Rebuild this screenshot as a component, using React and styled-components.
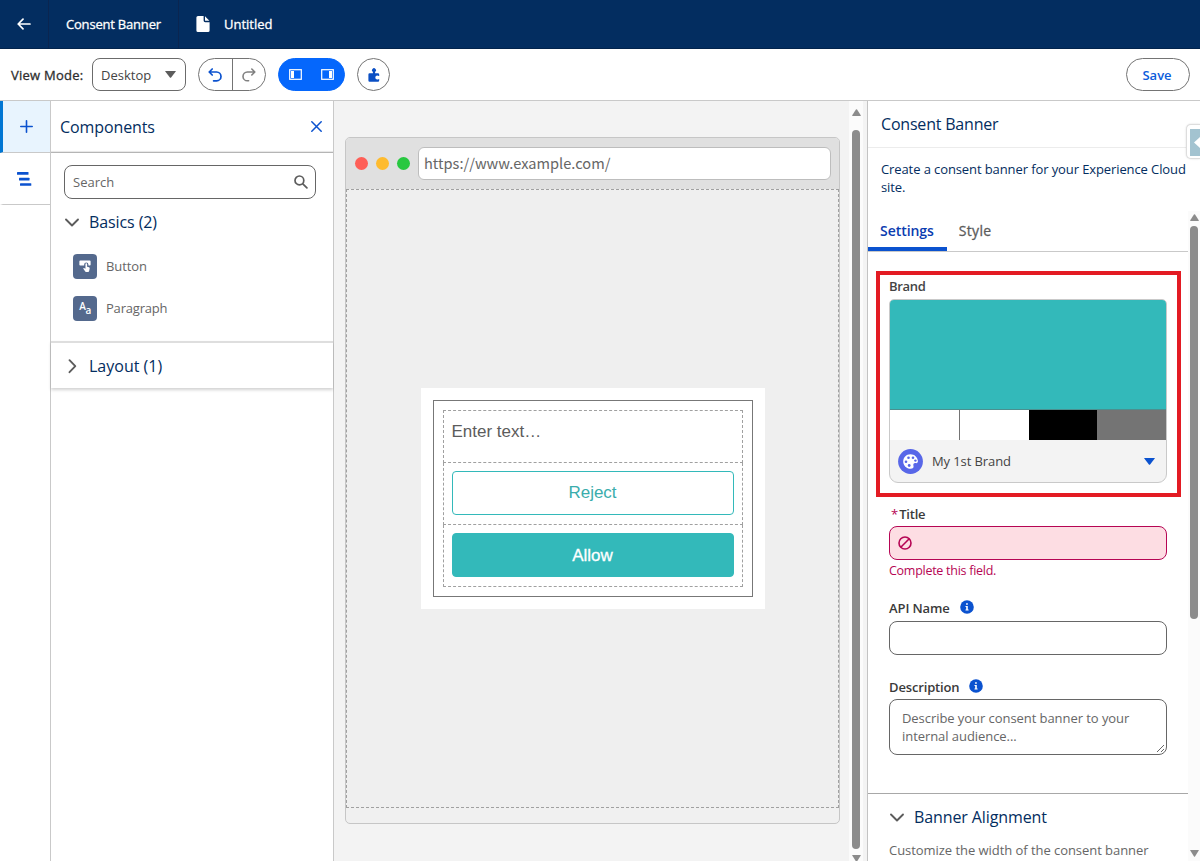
import React from 'react';
import styled, { createGlobalStyle } from 'styled-components';

const GlobalStyle = createGlobalStyle`
  * {
    box-sizing: border-box;
  }
  body {
    margin: 0;
    overflow: hidden;
    background: #fff;
    color: #2e2e2e;
    font-family: "Open Sans", "Noto Sans", sans-serif;
    font-size: 13px;
  }
  svg {
    display: block;
    flex: none;
  }
`;

const Page = styled.div`
  width: 1200px;
  height: 861px;
  display: flex;
  flex-direction: column;
  overflow: hidden;
`;

const Label = styled.span`
  font-size: ${props => props.$size || 13}px;
  font-weight: ${props => props.$weight || 400};
  letter-spacing: ${props => props.$track || 0}px;
  line-height: 18px;
  color: ${props => props.$color || 'inherit'};
  white-space: nowrap;
  -webkit-text-stroke: ${props => (props.$medium ? '0.3px' : '0')};
`;

const UrlText = styled(Label)`
  font-family: "Noto Sans CJK SC", "Noto Sans", sans-serif;
`;

/* top bar */

const TopBar = styled.header`
  height: 49px;
  flex: none;
  display: flex;
  background: #032d60;
  border-bottom: 1px solid #02234c;
  color: #fff;
`;

const TopCell = styled.div`
  width: ${props => props.$width}px;
  display: flex;
  align-items: center;
  padding-left: ${props => props.$pad}px;
  padding-bottom: 1px;
  gap: 14px;
  border-right: ${props => (props.$last ? 'none' : '1px solid #0a2550')};
`;

/* toolbar */

const Toolbar = styled.div`
  height: 52px;
  flex: none;
  display: flex;
  align-items: center;
  padding: 0 10px 0 11px;
  border-bottom: 1px solid #c9c9c9;
`;

const ModeLabel = styled.div`
  width: 73px;
  display: flex;
`;

const ModeSelect = styled.div`
  width: 94px;
  height: 33px;
  margin-left: 8px;
  padding: 0 9px 0 8px;
  display: flex;
  align-items: center;
  justify-content: space-between;
  border: 1px solid #6b6b6b;
  border-radius: 8px;
`;

const PillGroup = styled.div`
  width: ${props => props.$width}px;
  height: 33px;
  margin-left: 12px;
  display: flex;
  overflow: hidden;
  border-radius: 17px;
  border: 1px solid ${props => (props.$filled ? '#0567fc' : '#747474')};
  background: ${props => (props.$filled ? '#0567fc' : '#fff')};
`;

const PillCell = styled.div`
  flex: 1;
  display: flex;
  align-items: center;
  justify-content: center;
  border-right: ${props => (props.$divided ? '1px solid #747474' : 'none')};
`;

const SaveButton = styled.div`
  width: 64px;
  height: 33px;
  margin-left: auto;
  padding-right: 2px;
  display: flex;
  align-items: center;
  justify-content: center;
  border: 1px solid #747474;
  border-radius: 17px;
`;

/* left side */

const Body = styled.div`
  flex: 1;
  min-height: 0;
  display: flex;
`;

const Rail = styled.nav`
  width: 51px;
  flex: none;
  border-right: 1px solid #c9c9c9;
`;

const RailItem = styled.div`
  height: 52px;
  display: flex;
  align-items: center;
  justify-content: center;
  border-bottom: 1px solid #c9c9c9;
  border-left: 3px solid ${props => (props.$active ? '#0176d3' : '#fff')};
  background: ${props => (props.$active ? '#e8f4fe' : '#fff')};
  padding-right: ${props => (props.$active ? 0 : 4)}px;
`;

const Components = styled.aside`
  width: 283px;
  flex: none;
  border-right: 1px solid #c9c9c9;
`;

const PanelHead = styled.div`
  height: 52px;
  display: flex;
  align-items: center;
  justify-content: space-between;
  padding: 0 11px 0 9px;
  border-bottom: 1px solid #b5b5b5;
  box-shadow: inset 0 -2px 1px -1px rgba(0, 0, 0, 0.1);
`;

const SearchBox = styled.div`
  height: 34px;
  margin: 12px 17px 0 13px;
  padding: 0 7px 0 8px;
  display: flex;
  align-items: center;
  justify-content: space-between;
  border: 1px solid #666;
  border-radius: 8px;
`;

const SectionHead = styled.div`
  height: ${props => props.$height}px;
  display: flex;
  align-items: center;
  gap: 9px;
  padding-left: 13px;
`;

const ComponentRow = styled.div`
  height: 42px;
  display: flex;
  align-items: center;
  gap: 9px;
  padding-left: 22px;
`;

const ComponentIcon = styled.div`
  width: 24px;
  height: 25px;
  display: flex;
  align-items: center;
  justify-content: center;
  border-radius: 4px;
  background: #54698d;
`;

const LayoutSection = styled.div`
  margin-top: 12px;
  border-top: 2px solid #dedede;
  box-shadow: 0 2px 3px rgba(0, 0, 0, 0.18);
`;

/* canvas */

const Canvas = styled.main`
  flex: 1;
  display: flex;
  background: #f3f3f3;
`;

const BrowserFrame = styled.div`
  width: 495px;
  height: 687px;
  margin: 36px 0 0 11px;
  display: flex;
  flex-direction: column;
  border: 1px solid #c6c6c6;
  border-radius: 5px;
  background: #f0f0f0;
  overflow: hidden;
`;

const BrowserBar = styled.div`
  height: 51px;
  flex: none;
  display: flex;
  align-items: center;
  gap: 8px;
  padding: 0 8px 0 9px;
  background: #e0e0e0;
`;

const Dot = styled.i`
  width: 13px;
  height: 13px;
  border-radius: 50%;
  background: ${props => props.$color};
`;

const Address = styled.div`
  flex: 1;
  height: 33px;
  display: flex;
  align-items: center;
  padding: 0 0 1px 5px;
  border: 1px solid #bdbdbd;
  border-radius: 6px;
  background: #fff;
`;

const Stage = styled.div`
  height: 619px;
  flex: none;
  display: flex;
  align-items: center;
  justify-content: center;
  border: 1px dashed #a0a0a0;
  background: #efefef;
`;

const BannerCard = styled.div`
  width: 344px;
  height: 221px;
  padding: 12px;
  background: #fff;
`;

const BannerFrame = styled.div`
  height: 197px;
  padding: 9px;
  border: 1px solid #777;
`;

const BannerSlot = styled.div`
  height: ${props => props.$height}px;
  padding: 8px;
  font-family: "Liberation Sans", Arial, sans-serif;
  border: 1px dashed #a0a0a0;
  border-top-width: ${props => (props.$first ? 1 : 0)}px;
`;

const BannerText = styled.div`
  padding-top: 3px;
  font-size: 17px;
  line-height: 19px;
  color: #5c5c5c;
`;

const BannerButton = styled.div`
  height: 44px;
  padding-top: ${props => (props.$filled ? 1 : 0)}px;
  display: flex;
  align-items: center;
  justify-content: center;
  border: 1px solid #33b9ba;
  border-radius: 4px;
  font-size: 17px;
  color: ${props => (props.$filled ? '#fff' : '#3aadac')};
  background: ${props => (props.$filled ? '#33b9ba' : '#fff')};
  -webkit-text-stroke: ${props => (props.$filled ? '0.3px' : '0')};
`;

const Scrollbar = styled.div`
  width: ${props => props.$width}px;
  height: ${props => props.$height}px;
  margin-left: ${props => props.$gap || 0}px;
  flex: none;
  display: flex;
  flex-direction: column;
  align-items: center;
  padding: ${props => props.$pad}px 0 0;
  background: #fbfbfb;
`;

const Thumb = styled.div`
  width: 8px;
  height: ${props => props.$height}px;
  margin: ${props => props.$top}px 0 ${props => props.$bottom}px;
  flex: none;
  border-radius: 4px;
  background: #8b8b8b;
`;

/* right side */

const Inspector = styled.aside`
  position: relative;
  width: 333px;
  flex: none;
  border-left: 1px solid #c3c3c3;
  background: #fff;
`;

const InspectorTitle = styled.div`
  height: 47px;
  padding: 14px 12px 0 13px;
  border-bottom: 1px solid #ececec;
`;

const Intro = styled.div`
  height: 63px;
  padding: 12px 12px 0 13px;
  display: flex;
  flex-direction: column;
`;

const InspectorBody = styled.div`
  display: flex;
`;

const Settings = styled.div`
  width: 320px;
`;

const Tabs = styled.div`
  height: 41px;
  display: flex;
  border-bottom: 1px solid #c9c9c9;
`;

const Tab = styled.div`
  height: 40px;
  padding: 11px 13px 0 12px;
  border-bottom: ${props => (props.$active ? '4px solid #0b52cf' : 'none')};
`;

const Highlight = styled.div`
  width: 305px;
  height: 226px;
  margin: 19px 0 0 8px;
  padding: 2px 10px 0 9px;
  border: 4px solid #e31b23;
`;

const BrandCard = styled.div`
  width: 278px;
  height: 184px;
  margin-top: 4px;
  border: 1px solid #c9c9c9;
  border-radius: 5px 5px 9px 9px;
  overflow: hidden;
  background: #f3f3f3;
`;

const BrandColor = styled.div`
  height: 110px;
  background: #33b9ba;
  border-bottom: 1px solid #4b8f8f;
`;

const Swatches = styled.div`
  height: 30px;
  display: flex;
`;

const Swatch = styled.div`
  flex: 1;
  background: ${props => props.$color};
  border-right: ${props => (props.$divided ? '1px solid #747474' : 'none')};
`;

const BrandFooter = styled.div`
  height: 42px;
  display: flex;
  align-items: center;
  padding: 0 11px 0 8px;
  gap: 9px;
  svg:last-child {
    margin-left: auto;
  }
`;

const Fields = styled.div`
  padding: 8px 21px 0;
  height: 296px;
`;

const FieldLabel = styled.div`
  height: 18px;
  margin-top: ${props => props.$top || 0}px;
  display: flex;
  align-items: center;
  gap: 10px;
  svg {
    margin-top: -2px;
  }
`;

const Required = styled.span`
  display: flex;
  margin: 0 -9px 0 2px;
  color: #b60554;
`;

const Input = styled.div`
  height: 34px;
  margin-top: ${props => props.$top}px;
  padding-left: 8px;
  display: flex;
  align-items: center;
  border: 1px solid ${props => (props.$error ? '#b60554' : '#666')};
  border-radius: 8px;
  background: ${props => (props.$error ? '#fddde3' : '#fff')};
`;

const TextArea = styled.div`
  height: 56px;
  margin-top: 3px;
  padding: 9px 1px 1px 12px;
  display: flex;
  justify-content: space-between;
  align-items: flex-end;
  border: 1px solid #666;
  border-radius: 8px;
`;

const Lines = styled.div`
  display: flex;
  flex-direction: column;
  align-self: flex-start;
`;

const Alignment = styled.div`
  border-top: 1px solid #a8a8a8;
  padding: 14px 21px 0;
`;

const AlignmentHead = styled.div`
  display: flex;
  align-items: center;
  gap: 9px;
  margin-bottom: 15px;
`;

const Handle = styled.div`
  position: absolute;
  right: 0;
  top: 23px;
  width: 14px;
  height: 35px;
  padding: 4px 0 0 3px;
  border: 1px solid #ddd;
  border-right: none;
  border-radius: 5px 0 0 5px;
  background: #fff;
  box-shadow: 0 0 2px rgba(0, 0, 0, 0.15);
`;

const ArrowLeft = () => (
  <svg width="14" height="12" viewBox="0 0 14 12" fill="none" stroke="#fff" strokeWidth="1.7" strokeLinecap="round" strokeLinejoin="round">
    <path d="M13 6H1.2M6 1.2L1.2 6L6 10.8" />
  </svg>
);

const FileIcon = () => (
  <svg width="14" height="16" viewBox="0 0 14 16" fill="#fff">
    <path d="M2 0H7.6V4.6Q7.6 6.2 9.2 6.2H13.6V14.4Q13.6 16 12 16H2Q.4 16 .4 14.4V1.6Q.4 0 2 0Z" />
    <path d="M9 .3L13.4 4.8H9.6Q9 4.8 9 4.2Z" />
  </svg>
);

const Triangle = ({ color, up, width = 11, height = 7 }) => (
  <svg width={width} height={height} viewBox="0 0 11 7" preserveAspectRatio="none" fill={color}>
    <path d={up ? 'M.6 7H10.4Q11 7 10.7 6.3L6.2.5Q5.5 0 4.8.5L.3 6.3Q0 7 .6 7Z' : 'M.5 0H10.5Q11 0 10.7.6L6.1 6.5Q5.5 7 4.9 6.5L.3.6Q0 0 .5 0Z'} />
  </svg>
);

const UndoIcon = () => (
  <svg width="14" height="14" viewBox="0 0 14 14" fill="none" stroke="#0b52cf" strokeWidth="1.7" strokeLinecap="round" strokeLinejoin="round">
    <path d="M4.2 1L1.2 4L4.2 7M1.4 4H8.6A4.4 4.4 0 0 1 8.6 12.8H5.6" />
  </svg>
);

const RedoIcon = () => (
  <svg width="14" height="14" viewBox="0 0 14 14" fill="none" stroke="#808080" strokeWidth="1.6" strokeLinecap="round" strokeLinejoin="round">
    <path d="M9.8 1L12.8 4L9.8 7M12.6 4H5.4A4.4 4.4 0 0 0 5.4 12.8H6.6" />
  </svg>
);

const PanelIcon = ({ right }) => (
  <svg width="13" height="11" viewBox="0 0 13 11">
    <rect x=".7" y=".7" width="11.6" height="9.6" fill="none" stroke="#fff" strokeWidth="1.2" />
    <rect x={right ? 8 : 2} y="2" width="3" height="7" fill="#fff" />
  </svg>
);

const PuzzleIcon = () => (
  <svg width="12" height="14" viewBox="0 0 12 14" fill="#0b4fc4">
    <path d="M1.6 5.2H4.9V3.9A2 2 0 1 1 7.1 3.9V5.2H9.9Q11.2 5.2 11.2 6.4V7.9H10.9Q10.2 7.4 9.3 7.4A2 2 0 0 0 9.3 11.4Q10.2 11.4 10.9 10.9H11.2V12.6Q11.2 13.8 10 13.8H1.6Q.4 13.8 .4 12.6V6.4Q.4 5.2 1.6 5.2Z" />
  </svg>
);

const PlusIcon = () => (
  <svg width="13" height="13" viewBox="0 0 13 13" stroke="#0b52cf" strokeWidth="1.6" strokeLinecap="round">
    <path d="M6.5 .8V12.2M.8 6.5H12.2" />
  </svg>
);

const TreeIcon = () => (
  <svg width="15" height="14" viewBox="0 0 15 14" fill="#0b52cf">
    <rect x="0" y="0" width="11.5" height="2.8" rx=".5" />
    <rect x="2" y="5.8" width="10.5" height="2.6" rx=".5" />
    <rect x="3" y="11.2" width="11.3" height="2.6" rx=".5" />
  </svg>
);

const CloseIcon = () => (
  <svg width="11" height="11" viewBox="0 0 11 11" stroke="#0b52cf" strokeWidth="1.5" strokeLinecap="round">
    <path d="M.8 .8L10.2 10.2M10.2 .8L.8 10.2" />
  </svg>
);

const SearchIcon = () => (
  <svg width="14" height="14" viewBox="0 0 14 14" fill="none" stroke="#5c5c5c" strokeWidth="1.7" strokeLinecap="round">
    <circle cx="5.4" cy="5.4" r="4.4" />
    <path d="M8.8 8.8L12.9 12.9" />
  </svg>
);

const Chevron = ({ right }) => (
  <svg width="16" height="16" viewBox="0 0 16 16" fill="none" stroke="#5c5c5c" strokeWidth="1.9" strokeLinecap="round" strokeLinejoin="round">
    <path d={right ? 'M5.5 2.2L11.3 8.2L5.5 14.2' : 'M2 5.5L8 11.5L14 5.5'} />
  </svg>
);

const ButtonGlyph = () => (
  <svg width="12" height="13" viewBox="0 0 13 13" fill="#fff">
    <path d="M1.4 0H11.6Q12.6 0 12.6 1V4.6Q12.6 5.4 11.6 5.4H10.2V4.4A2.3 2.3 0 0 0 5.6 4.4V5.4H1.4Q.4 5.4 .4 4.6V1Q.4 0 1.4 0Z" />
    <path d="M7 3.9A.9 .9 0 0 1 8.8 3.9V6.8L10.9 7.4Q11.7 7.7 11.6 8.5L11 11.4Q10.8 12.4 9.8 12.4H8Q7.2 12.4 6.8 11.8L4.5 8.7Q5 7.8 6 8.3L7 8.9Z" />
  </svg>
);

const GlyphText = styled.span`
  margin-top: ${props => (props.$low ? 4 : -4)}px;
  color: #fff;
  font-size: 10px;
  font-weight: 600;
  line-height: 10px;
  letter-spacing: -0.5px;
`;

const PaletteIcon = () => (
  <svg width="25" height="25" viewBox="0 0 25 25">
    <circle cx="12.5" cy="12.5" r="12.4" fill="#5867e8" />
    <path d="M12.5 5.2C8 5.2 5.2 8.7 5.2 12.5C5.2 16.6 8.5 19.8 12.6 19.8C14.8 19.8 16 18.6 15.5 17C14.8 14.8 16 13.9 17.6 14.1C19.2 14.3 20 13.6 19.9 12C19.5 8 16.5 5.2 12.5 5.2Z" fill="#fff" />
    <g fill="#5867e8">
      <circle cx="10.5" cy="8.8" r="1.3" />
      <circle cx="15" cy="8.8" r="1.3" />
      <circle cx="8" cy="12.7" r="1.3" />
      <circle cx="11.2" cy="16.5" r="1.4" />
      <circle cx="17.4" cy="11.6" r="1.2" />
    </g>
  </svg>
);

const ErrorIcon = () => (
  <svg width="14" height="14" viewBox="0 0 14 14" fill="none" stroke="#b60554" strokeWidth="1.6">
    <circle cx="7" cy="7" r="6" />
    <path d="M2.8 11.2L11.2 2.8" />
  </svg>
);

const InfoIcon = () => (
  <svg width="14" height="14" viewBox="0 0 14 14">
    <circle cx="7" cy="7" r="6.8" fill="#0b52cf" />
    <path d="M6.1 3.2H7.8V4.7H6.1ZM5.5 5.9H7.8V9.6H8.6V10.6H5.5V9.6H6.2V6.9H5.5Z" fill="#fff" />
  </svg>
);

const ResizeGrip = () => (
  <svg width="9" height="9" viewBox="0 0 9 9" stroke="#666" strokeWidth="1">
    <path d="M1 8L8 1M5 8L8 5" />
  </svg>
);

const HandleArrow = () => (
  <svg width="11" height="27" viewBox="0 0 11 27">
    <rect width="11" height="27" fill="#a3c3d0" />
    <path d="M4 13.5L11 7V20Z" fill="#fff" />
  </svg>
);

export default function App() {
  return (
    <Page>
      <GlobalStyle />
      <TopBar>
        <TopCell $width={49} $pad={17}>
          <ArrowLeft />
        </TopCell>
        <TopCell $width={130} $pad={17}>
          <Label $medium $track={-0.2}>Consent Banner</Label>
        </TopCell>
        <TopCell $width={300} $pad={17} $last>
          <FileIcon />
          <Label $medium>Untitled</Label>
        </TopCell>
      </TopBar>

      <Toolbar>
        <ModeLabel>
          <Label $medium $track={0.25}>View Mode:</Label>
        </ModeLabel>
        <ModeSelect>
          <Label $color="#444">Desktop</Label>
          <Triangle color="#5c5c5c" />
        </ModeSelect>
        <PillGroup $width={68}>
          <PillCell $divided><UndoIcon /></PillCell>
          <PillCell><RedoIcon /></PillCell>
        </PillGroup>
        <PillGroup $width={67} $filled>
          <PillCell><PanelIcon /></PillCell>
          <PillCell><PanelIcon right /></PillCell>
        </PillGroup>
        <PillGroup $width={33}>
          <PillCell><PuzzleIcon /></PillCell>
        </PillGroup>
        <SaveButton>
          <Label $weight={600} $color="#0b5cdb">Save</Label>
        </SaveButton>
      </Toolbar>

      <Body>
        <Rail>
          <RailItem $active><PlusIcon /></RailItem>
          <RailItem><TreeIcon /></RailItem>
        </Rail>

        <Components>
          <PanelHead>
            <Label $size={16} $track={-0.1} $color="#032d60">Components</Label>
            <CloseIcon />
          </PanelHead>
          <SearchBox>
            <Label $color="#666">Search</Label>
            <SearchIcon />
          </SearchBox>
          <SectionHead $height={46}>
            <Chevron />
            <Label $size={16} $track={-0.1} $color="#032d60">Basics (2)</Label>
          </SectionHead>
          <ComponentRow>
            <ComponentIcon><ButtonGlyph /></ComponentIcon>
            <Label $track={-0.1} $color="#666">Button</Label>
          </ComponentRow>
          <ComponentRow>
            <ComponentIcon>
              <GlyphText>A</GlyphText>
              <GlyphText $low>a</GlyphText>
            </ComponentIcon>
            <Label $track={-0.2} $color="#666">Paragraph</Label>
          </ComponentRow>
          <LayoutSection>
            <SectionHead $height={45}>
              <Chevron right />
              <Label $size={16} $color="#032d60">Layout (1)</Label>
            </SectionHead>
          </LayoutSection>
        </Components>

        <Canvas>
          <BrowserFrame>
            <BrowserBar>
              <Dot $color="#fe5f57" />
              <Dot $color="#febb2e" />
              <Dot $color="#28c840" />
              <Address>
                <UrlText $size={14.6} $color="#666">https://www.example.com/</UrlText>
              </Address>
            </BrowserBar>
            <Stage>
              <BannerCard>
                <BannerFrame>
                  <BannerSlot $height={53} $first>
                    <BannerText>Enter text…</BannerText>
                  </BannerSlot>
                  <BannerSlot $height={62}>
                    <BannerButton>Reject</BannerButton>
                  </BannerSlot>
                  <BannerSlot $height={62}>
                    <BannerButton $filled>Allow</BannerButton>
                  </BannerSlot>
                </BannerFrame>
              </BannerCard>
            </Stage>
          </BrowserFrame>
          <Scrollbar $width={14} $height={760} $gap={9} $pad={8}>
            <Triangle color="#8b8b8b" up width={9} height={7} />
            <Thumb $height={719} $top={14} $bottom={6} />
            <Triangle color="#8b8b8b" width={9} height={7} />
          </Scrollbar>
        </Canvas>

        <Inspector>
          <InspectorTitle>
            <Label $size={16} $track={-0.2} $color="#032d60">Consent Banner</Label>
          </InspectorTitle>
          <Intro>
            <Label $track={-0.1} $color="#032d60">Create a consent banner for your Experience Cloud</Label>
            <Label $track={-0.1} $color="#032d60">site.</Label>
          </Intro>
          <InspectorBody>
            <Settings>
              <Tabs>
                <Tab $active><Label $size={14} $weight={600} $track={-0.05} $color="#0a3cb0">Settings</Label></Tab>
                <Tab><Label $size={14} $medium $track={0.3} $color="#5c5c5c">Style</Label></Tab>
              </Tabs>
              <Highlight>
                <Label $weight={600} $track={-0.3} $color="#444">Brand</Label>
                <BrandCard>
                  <BrandColor />
                  <Swatches>
                    <Swatch $color="#fff" $divided />
                    <Swatch $color="#fff" />
                    <Swatch $color="#000" />
                    <Swatch $color="#747474" />
                  </Swatches>
                  <BrandFooter>
                    <PaletteIcon />
                    <Label $track={-0.1} $color="#444">My 1st Brand</Label>
                    <Triangle color="#0b52cf" />
                  </BrandFooter>
                </BrandCard>
              </Highlight>
              <Fields>
                <FieldLabel>
                  <Required>*</Required>
                  <Label $weight={600} $track={-0.2} $color="#3a3a3a">Title</Label>
                </FieldLabel>
                <Input $top={3} $error><ErrorIcon /></Input>
                <FieldLabel $top={2}>
                  <Label $size={12.5} $track={-0.27} $color="#b60554">Complete this field.</Label>
                </FieldLabel>
                <FieldLabel $top={19}>
                  <Label $weight={600} $track={-0.1} $color="#3a3a3a">API Name</Label>
                  <InfoIcon />
                </FieldLabel>
                <Input $top={4} />
                <FieldLabel $top={23}>
                  <Label $weight={600} $track={-0.15} $color="#3a3a3a">Description</Label>
                  <InfoIcon />
                </FieldLabel>
                <TextArea>
                  <Lines>
                    <Label $track={-0.06} $color="#666">Describe your consent banner to your</Label>
                    <Label $track={-0.06} $color="#666">internal audience...</Label>
                  </Lines>
                  <ResizeGrip />
                </TextArea>
              </Fields>
              <Alignment>
                <AlignmentHead>
                  <Chevron />
                  <Label $size={16} $track={-0.1} $color="#032d60">Banner Alignment</Label>
                </AlignmentHead>
                <Label $track={-0.05} $color="#666">Customize the width of the consent banner</Label>
              </Alignment>
            </Settings>
            <Scrollbar $width={12} $height={650} $pad={3}>
              <Triangle color="#8b8b8b" up width={9} height={7} />
              <Thumb $height={393} $top={5} $bottom={231} />
              <Triangle color="#8b8b8b" width={9} height={7} />
            </Scrollbar>
          </InspectorBody>
          <Handle><HandleArrow /></Handle>
        </Inspector>
      </Body>
    </Page>
  );
}
